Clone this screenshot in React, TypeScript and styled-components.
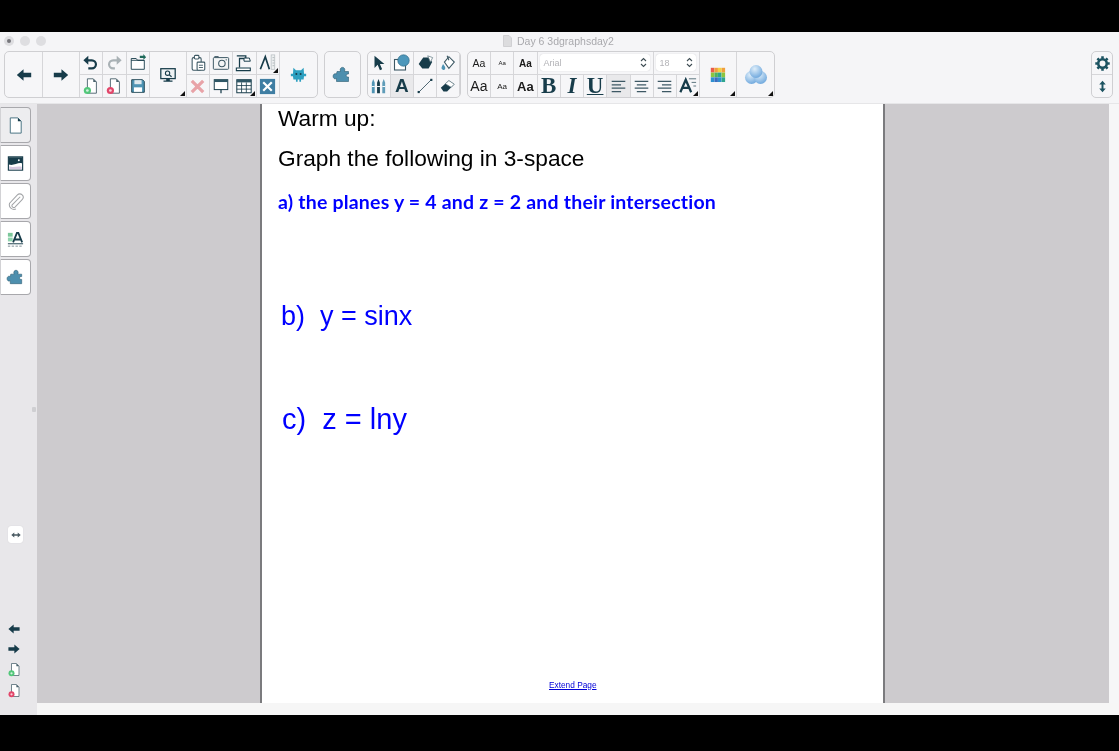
import React from "react";
import styled, { createGlobalStyle } from "styled-components";

const INK = "#173c4a";
const TEAL = "#4f94b4";

const GlobalStyle = createGlobalStyle`
    html, body {
        margin: 0;
        padding: 0;
        background: #000;
        font-family: "Liberation Sans", Arial, sans-serif;
    }
`;

const Screen = styled.div`
    width: 1119px;
    height: 751px;
    overflow: hidden;
    background: #000;
    display: flex;
    flex-direction: column;
    padding: 32px 0 36px;
    box-sizing: border-box;
`;

const Chrome = styled.div`
    background: #f5f5f7;
    filter: blur(0.35px);
    border-bottom: 1px solid #e6e6e8;
`;

const TitleBar = styled.div`
    height: 18px;
    display: flex;
    align-items: center;
    padding-left: 4px;
    position: relative;
`;

const Light = styled.span<{ $dot?: boolean }>`
    width: 10px;
    height: 10px;
    margin-right: 6px;
    border-radius: 50%;
    background: #dedee1;
    display: flex;
    align-items: center;
    justify-content: center;
    &::after {
        content: "";
        width: 4px;
        height: 4px;
        border-radius: 50%;
        background: ${(p) => (p.$dot ? "#77777c" : "transparent")};
    }
`;

const Title = styled.div`
    margin-left: 451px;
    display: flex;
    align-items: center;
    gap: 5px;
    font-size: 10.5px;
    color: #a9a9ad;
`;

const Toolbar = styled.div`
    height: 53px;
    padding: 1px 6px 0 4px;
    display: flex;
    align-items: flex-start;
    justify-content: space-between;
    box-sizing: border-box;
`;

const Groups = styled.div`
    display: flex;
    gap: 6px;
`;

const Group = styled.div`
    height: 47px;
    display: flex;
    border: 1px solid #cfcfd2;
    border-radius: 5px;
    box-sizing: border-box;
    background: #f6f6f8;
    overflow: hidden;
`;

const Stack = styled.div`
    display: flex;
    flex-direction: column;
`;

const Row = styled.div`
    display: flex;
    height: 23px;
    & + & {
        border-top: 1px solid #d6d6d9;
        height: 22px;
    }
`;

const Cell = styled.div<{ $w?: number; $on?: boolean; $tall?: boolean; $corner?: boolean }>`
    width: ${(p) => p.$w ?? 23.25}px;
    height: 100%;
    flex: none;
    position: relative;
    box-sizing: border-box;
    display: flex;
    align-items: center;
    justify-content: center;
    border-right: 1px solid #d6d6d9;
    background: ${(p) => (p.$on ? "#e9e9eb" : "transparent")};
    color: ${INK};
    &:last-child {
        border-right: ${(p) => (p.$tall ? "none" : "1px solid #d6d6d9")};
    }
    &::after {
        content: "";
        display: ${(p) => (p.$corner ? "block" : "none")};
        position: absolute;
        right: 1px;
        bottom: 1px;
        border-style: solid;
        border-width: 0 0 5px 5px;
        border-color: transparent transparent #111 transparent;
    }
`;

const SampleText = styled.span<{ $size: number; $bold?: boolean }>`
    font-size: ${(p) => p.$size}px;
    font-weight: ${(p) => (p.$bold ? 700 : 400)};
    color: #1a1a1a;
`;

const SerifMark = styled.span<{ $italic?: boolean; $under?: boolean }>`
    font-family: "Liberation Serif", "Times New Roman", serif;
    font-size: 23px;
    line-height: 22px;
    font-weight: 700;
    color: ${INK};
    font-style: ${(p) => (p.$italic ? "italic" : "normal")};
    text-decoration: ${(p) => (p.$under ? "underline" : "none")};
    text-decoration-thickness: 1px;
    text-underline-offset: 1px;
`;

const TextToolMark = styled.span`
    font-size: 19px;
    line-height: 22px;
    font-weight: 700;
    color: ${INK};
`;

const PickerCell = styled.div<{ $w: number }>`
    width: ${(p) => p.$w}px;
    height: 100%;
    flex: none;
    box-sizing: border-box;
    padding: 2px 3px 3px 2px;
    border-right: 1px solid #d6d6d9;
`;

const Picker = styled.div`
    height: 100%;
    box-sizing: border-box;
    padding: 0 3px 0 4px;
    background: #fff;
    border-radius: 3px;
    box-shadow: 0 0 1px #bcbcc0;
    display: flex;
    align-items: center;
    justify-content: space-between;
    font-size: 9px;
    color: #b3b3b7;
`;

const Body = styled.div`
    flex: 1;
    min-height: 0;
    display: flex;
    background: #f6f6f7;
`;

const Sidebar = styled.div`
    width: 37px;
    flex: none;
    background: #e8e7ea;
    display: flex;
    flex-direction: column;
    padding-top: 3px;
    box-sizing: border-box;
    position: relative;
    filter: blur(0.3px);
`;

const Tabs = styled.div`
    display: flex;
    flex-direction: column;
    gap: 2px;
`;

const Tab = styled.div<{ $on?: boolean }>`
    width: 30px;
    height: 36px;
    margin-left: 1px;
    box-sizing: border-box;
    background: ${(p) => (p.$on ? "#ededef" : "#fff")};
    border: 1px solid #a8a8ac;
    border-left: none;
    border-radius: 0 4px 4px 0;
    box-shadow: -1px 0 0 #d2d2d5;
    display: flex;
    align-items: center;
    justify-content: center;
`;

const Handle = styled.span`
    position: absolute;
    right: 1px;
    top: 303px;
    width: 4px;
    height: 5px;
    border-radius: 1px;
    background: #cfcfd2;
`;

const WidthToggle = styled.div`
    width: 15px;
    height: 17px;
    margin: 231px 0 0 8px;
    background: #fff;
    border-radius: 3px;
    display: flex;
    align-items: center;
    justify-content: center;
    box-shadow: 0 0 1px #c4c4c8;
`;

const PageNav = styled.div`
    margin: auto 0 17px 7px;
    display: flex;
    flex-direction: column;
    gap: 6px;
    & > svg {
        display: block;
    }
`;

const Workspace = styled.div`
    flex: 1;
    display: flex;
    flex-direction: column;
    min-width: 0;
`;

const Canvas = styled.div`
    flex: 1;
    min-height: 0;
    background: #cdcbce;
    margin-right: 10px;
    padding-left: 223px;
`;

const Sheet = styled.div`
    width: 625px;
    height: 100%;
    box-sizing: border-box;
    background: #fff;
    border-left: 2px solid #7b7b7e;
    border-right: 2px solid #7b7b7e;
    padding-left: 16px;
    display: flex;
    flex-direction: column;
    color: #000;
    filter: blur(0.25px);
`;

const Heading = styled.div<{ $gap: number }>`
    font-size: 22.7px;
    line-height: 28px;
    margin-top: ${(p) => p.$gap}px;
`;

const HandNote = styled.div`
    font-family: "Lato", "Open Sans", sans-serif;
    font-weight: 700;
    font-size: 19.5px;
    line-height: 24px;
    letter-spacing: 0.2px;
    color: #0000ff;
    margin-top: 18px;
`;

const Problem = styled.div<{ $gap: number; $indent: number; $size: number }>`
    font-size: ${(p) => p.$size}px;
    line-height: 34px;
    color: #0000ff;
    white-space: pre;
    margin-top: ${(p) => p.$gap}px;
    margin-left: ${(p) => p.$indent}px;
`;

const ExtendLink = styled.a`
    margin: auto 0 12px 271px;
    font-size: 8.3px;
    line-height: 12px;
    color: #0000d8;
    text-decoration: underline;
`;

const BottomStrip = styled.div`
    height: 12px;
    flex: none;
    background: #f6f6f6;
    box-sizing: border-box;
`;

type IconProps = { size?: number };

const Ico = ({ size = 20, children }: IconProps & { children: React.ReactNode }) => (
    <svg width={size} height={size} viewBox="0 0 20 20" fill="none">
        {children}
    </svg>
);

const ArrowLeft = ({ size = 20 }: IconProps) => (
    <Ico size={size}>
        <path d="M2 10 L9.5 3.5 V7.5 H18 V12.5 H9.5 V16.5 Z" fill={INK} />
    </Ico>
);
const ArrowRight = ({ size = 20 }: IconProps) => (
    <Ico size={size}>
        <path d="M18 10 L10.5 3.5 V7.5 H2 V12.5 H10.5 V16.5 Z" fill={INK} />
    </Ico>
);
const Undo = ({ color = INK }: { color?: string }) => (
    <Ico size={18}>
        <path d="M6 7 H11 A4.5 4.5 0 0 1 11 16 H7" stroke={color} strokeWidth="2.4" />
        <path d="M7 2 V12 L1.5 7 Z" fill={color} />
    </Ico>
);
const Redo = ({ color = "#a9b1b5" }: { color?: string }) => (
    <Ico size={18}>
        <path d="M14 7 H9 A4.5 4.5 0 0 0 9 16 H11" stroke={color} strokeWidth="2.4" />
        <path d="M13 2 V12 L18.5 7 Z" fill={color} />
    </Ico>
);
const Folder = () => (
    <Ico size={18}>
        <path d="M2.5 5 H8 L9.5 7 H17 V17 H2.5 Z" fill="#fff" stroke={INK} strokeWidth="1" />
        <path d="M2.5 7 H17" stroke={INK} strokeWidth="1" />
        <path d="M12 2 L16 2 V0 L19 3.5 L16 6.5 V4.5 H12 Z" fill="#1f6a5a" />
    </Ico>
);
const PageBadge = ({ badge, size = 18 }: { badge?: string; size?: number }) => (
    <Ico size={size}>
        <path d="M6 2 H12.5 L16 5.5 V18 H6 Z" fill="#fff" stroke="#47606b" strokeWidth="1" />
        <path d="M12.5 2 V5.5 H16 Z" fill="#47606b" />
        {badge && <circle cx="6" cy="15" r="4" fill={badge} />}
        {badge && <circle cx="6" cy="15" r="1.5" fill="#fff" opacity="0.75" />}
    </Ico>
);
const Floppy = () => (
    <Ico size={18}>
        <path d="M3 3 H15 L17 5 V17 H3 Z" fill={TEAL} stroke={INK} strokeWidth="1" />
        <rect x="6" y="3.5" width="8" height="4.5" fill="#dfe9ee" />
        <rect x="5.5" y="11.5" width="9" height="5" fill="#fff" />
    </Ico>
);
const Presenter = () => (
    <Ico size={18}>
        <rect x="2" y="3" width="16" height="11" fill="#eef2f4" stroke={INK} strokeWidth="1.4" />
        <circle cx="9.5" cy="8" r="2.4" stroke={INK} strokeWidth="1.2" />
        <path d="M11.5 10 L14 12" stroke={INK} strokeWidth="1.3" />
        <path d="M8 14 H12 V16 H15 V17.5 H5 V16 H8 Z" fill={INK} />
    </Ico>
);
const Clipboard = () => (
    <Ico size={18}>
        <rect x="3.5" y="4" width="10" height="14" rx="1.5" fill="#fff" stroke="#3d5864" strokeWidth="1.2" />
        <rect x="6" y="1.5" width="5" height="4" rx="1" fill="#fff" stroke="#3d5864" strokeWidth="1.2" />
        <rect x="9" y="9" width="8.5" height="9" rx="1" fill="#fff" stroke="#3d5864" strokeWidth="1.2" />
        <path d="M11 12.5 H15.5 M11 15 H15.5" stroke="#3d5864" strokeWidth="1" />
    </Ico>
);
const Camera = () => (
    <Ico size={18}>
        <rect x="1.5" y="4" width="17" height="13" rx="1" fill="#f3f5f6" stroke="#3d5864" strokeWidth="1.1" />
        <path d="M3 4 V2.8 H7 V4" stroke="#3d5864" strokeWidth="1" />
        <circle cx="11" cy="10.5" r="3.6" stroke="#3d5864" strokeWidth="1.2" />
        <circle cx="15.8" cy="6.5" r="0.8" fill="#3d5864" />
    </Ico>
);
const DocCamera = () => (
    <Ico size={18}>
        <path d="M2 2 H12 V5 H5 V15" stroke={INK} strokeWidth="1.4" fill="none" />
        <path d="M10 4.5 H16 L17 8 H10 Z" fill="#fff" stroke={INK} strokeWidth="1.1" />
        <path d="M1.5 15.5 H17 V18.5 H1.5 Z" fill="#fff" stroke={INK} strokeWidth="1.2" />
    </Ico>
);
const Compass = () => (
    <Ico size={18}>
        <path d="M1.5 17 L7 3 L11.5 17" stroke={INK} strokeWidth="1.9" />
        <rect x="13.5" y="1" width="4" height="16" fill="#eef0f1" stroke="#b5bcc0" strokeWidth="0.8" />
        <path d="M15 4 H17 M15 7 H17 M15 10 H17 M15 13 H17" stroke="#9fa8ad" strokeWidth="0.8" />
    </Ico>
);
const RedX = () => (
    <Ico size={19}>
        <path d="M4 4 L16 16 M16 4 L4 16" stroke="#e8a3a8" strokeWidth="3.4" />
    </Ico>
);
const Screenboard = () => (
    <Ico size={18}>
        <rect x="2.5" y="3" width="15" height="11" fill="#fff" stroke={INK} strokeWidth="1.1" />
        <rect x="2.5" y="3" width="15" height="2.6" fill="#2e5665" />
        <path d="M10 14 V18" stroke={INK} strokeWidth="1.4" />
    </Ico>
);
const TableGrid = () => (
    <Ico size={18}>
        <rect x="2" y="3" width="16" height="14.5" fill="#fff" stroke={INK} strokeWidth="1.1" />
        <rect x="2" y="3" width="16" height="3" fill="#2e5665" />
        <path d="M2 9.5 H18 M2 13.5 H18 M7.3 6 V17.5 M12.6 6 V17.5" stroke={INK} strokeWidth="0.9" />
    </Ico>
);
const ToolBox = () => (
    <Ico size={19}>
        <rect x="2" y="2" width="16" height="16" fill="#3f7ea3" />
        <path d="M5.5 5.5 L14.5 14.5 M14.5 5.5 L5.5 14.5" stroke="#fff" strokeWidth="2.3" />
    </Ico>
);
const Critter = () => (
    <Ico size={17}>
        <path
            d="M4 2 L7 5 H13 L16 2 L16.5 9 H19 V12 H16.5 L16 16 H13 V18.5 H11 V16 H9 V18.5 H7 V16 H4 L3.5 12 H1 V9 H3.5 Z"
            fill="#2c9fc0"
        />
        <circle cx="7.5" cy="9.5" r="1.2" fill={INK} />
        <circle cx="12.5" cy="9.5" r="1.2" fill={INK} />
    </Ico>
);
const Puzzle = ({ size = 19 }: IconProps) => (
    <Ico size={size}>
        <path
            d="M5 6.5 H8.5 C6.5 1 14.5 1 12.5 6.5 H16.5 V9 C13.5 8.5 13.5 12.5 16.5 12 V16.5 H4.5 V13.5 C0 15.5 0 7 4.5 9 Z"
            fill="#4d8fae"
            stroke="#2a5a70"
            strokeWidth="0.6"
        />
    </Ico>
);
const Pointer = () => (
    <Ico size={18}>
        <path d="M5 2 L16 11 H11 L13.5 17 L11 18 L8.5 12 L5 15.5 Z" fill={INK} />
    </Ico>
);
const Shapes = () => (
    <Ico size={20}>
        <rect x="2.5" y="6.5" width="11" height="10.5" fill="#fff" stroke="#3d5864" strokeWidth="1.1" />
        <circle cx="11.5" cy="7.5" r="5.7" fill="#4d97bb" stroke="#2f6c88" strokeWidth="0.7" />
    </Ico>
);
const Eraser3d = () => (
    <Ico size={18}>
        <path d="M8 4 H14 L18 9 L14 16 H7 L3 11 Z" fill={INK} />
        <path d="M13 2 L18.5 4 L16 9 Z" fill="#fff" stroke="#5d7680" strokeWidth="0.8" />
    </Ico>
);
const Bucket = () => (
    <Ico size={18}>
        <path d="M6 9 L11 3 L17 9 L11 16 Z" fill="#fff" stroke="#3d5864" strokeWidth="1.2" />
        <path d="M9 2 L11 7" stroke="#3d5864" strokeWidth="1.2" />
        <path d="M4.5 11 C3 14 2.5 15 3 16.5 C4 18.5 7 18 7 15.5 C7 14 5.5 12.5 4.5 11 Z" fill={TEAL} />
    </Ico>
);
const Pens = () => (
    <Ico size={19}>
        <path d="M3 6 L4.5 2 L6 6 V17 H3 Z" fill={TEAL} />
        <path d="M8.5 6 L10 2 L11.5 6 V17 H8.5 Z" fill={INK} />
        <path d="M14 6 L15.5 2 L17 6 V17 H14 Z" fill="#5f9cb8" />
        <path d="M3 10 H6 M8.5 10 H11.5 M14 10 H17" stroke="#fff" strokeWidth="1" />
    </Ico>
);
const LineTool = () => (
    <Ico size={18}>
        <path d="M3 17 L17 3" stroke="#3d5864" strokeWidth="1" />
        <rect x="1.8" y="15.5" width="2.4" height="2.4" fill={INK} />
        <rect x="15.8" y="2" width="2.4" height="2.4" fill={INK} />
    </Ico>
);
const Eraser = () => (
    <Ico size={18}>
        <path d="M2 12 L11 4 L17 8 L9 16 H5 Z" fill={INK} />
        <path d="M11 4 L17 8 L13.5 11.5 L7 7.5 Z" fill="#fff" stroke="#5d7680" strokeWidth="0.8" />
    </Ico>
);
const UpDown = () => (
    <svg width="7" height="11" viewBox="0 0 7 11" fill="none">
        <path d="M1 4 L3.5 1.5 L6 4 M1 7 L3.5 9.5 L6 7" stroke="#3f4d54" strokeWidth="1.1" />
    </svg>
);
const AlignLines = ({ mode }: { mode: "left" | "center" | "right" }) => {
    const long = [3, 7, 11, 15];
    const d = long
        .map((y, i) => {
            const w = i % 2 ? 11 : 16;
            const x = mode === "left" ? 2 : mode === "right" ? 18 - w : 10 - w / 2;
            return `M${x} ${y + 1} H${x + w}`;
        })
        .join(" ");
    return (
        <Ico size={17}>
            <path d={d} stroke="#3d5864" strokeWidth="1.4" />
        </Ico>
    );
};
const LetterSpacing = () => (
    <Ico size={18}>
        <path d="M1.5 17 L7.5 3 L13.5 17 M4 12 H11" stroke={INK} strokeWidth="2.5" />
        <path d="M11 2 H19 M14 6 H19 M16 10 H19" stroke="#5d7680" strokeWidth="1.1" />
    </Ico>
);
const Swatches = () => {
    const colors = [
        ["#e85b4a", "#f0a03c", "#f4d13f", "#f0a03c"],
        ["#8cc63f", "#4fb35f", "#2fa58e", "#8cc63f"],
        ["#2f8fd0", "#3a6fc0", "#2f8fd0", "#2fa58e"],
    ];
    return (
        <Ico size={18}>
            {colors.map((r, y) =>
                r.map((c, x) => <rect key={`${x}-${y}`} x={2 + x * 4} y={2 + y * 5.3} width="3.9" height="5.2" fill={c} />)
            )}
        </Ico>
    );
};
const Blobs = () => (
    <svg width="24" height="24" viewBox="0 0 24 24">
        <defs>
            <radialGradient id="blob" cx="40%" cy="30%" r="75%">
                <stop offset="0%" stopColor="#dfeefa" />
                <stop offset="100%" stopColor="#6aa5dc" />
            </radialGradient>
        </defs>
        <circle cx="7.5" cy="14.5" r="6.5" fill="url(#blob)" />
        <circle cx="16.5" cy="14.5" r="6.5" fill="url(#blob)" />
        <circle cx="12" cy="8.5" r="6.5" fill="url(#blob)" />
    </svg>
);
const Gear = () => (
    <Ico size={17}>
        <circle cx="10" cy="10" r="5" stroke="#1c5361" strokeWidth="3" />
        <path
            d="M10 1.5 V4.5 M10 15.5 V18.5 M1.5 10 H4.5 M15.5 10 H18.5 M4 4 L6 6 M14 14 L16 16 M16 4 L14 6 M6 14 L4 16"
            stroke="#1c5361"
            strokeWidth="3"
        />
    </Ico>
);
const TallArrows = () => (
    <Ico size={13}>
        <path d="M10 1 L15 7 H11.5 V13 H15 L10 19 L5 13 H8.5 V7 H5 Z" fill="#1c5361" />
    </Ico>
);
const WideArrows = () => (
    <svg width="10" height="6" viewBox="0 0 11 7">
        <path d="M0 3.5 L3.5 0.5 V2.6 H7.5 V0.5 L11 3.5 L7.5 6.5 V4.4 H3.5 V6.5 Z" fill="#4a5a62" />
    </svg>
);
const DocBlank = () => (
    <Ico size={19}>
        <path d="M4.5 2 H12.5 L16 5.5 V18 H4.5 Z" fill="#fff" stroke="#44707f" strokeWidth="1" />
        <path d="M12.5 2 V5.5 H16 Z" fill={INK} />
    </Ico>
);
const Gallery = () => (
    <Ico size={19}>
        <rect x="2.5" y="3" width="15" height="14" fill="#fff" stroke={INK} strokeWidth="1.2" />
        <path d="M3 3.5 H17 V10 C13 8 8 13 3 11 Z" fill={INK} />
        <circle cx="13.5" cy="6.5" r="1" fill="#fff" />
        <path d="M3.5 13 C8 15 12 12 16.5 13.5 V16 H3.5 Z" fill="#d6c9e0" />
    </Ico>
);
const Clip = () => (
    <Ico size={19}>
        <path
            d="M15 5 L6.5 13.5 A2 2 0 0 0 9.5 16 L17 8 A3.5 3.5 0 0 0 12 3 L3.8 11.8 A5 5 0 0 0 10.5 18"
            stroke="#a3a5a8"
            strokeWidth="1.1"
        />
    </Ico>
);
const Properties = () => (
    <Ico size={19}>
        <rect x="2" y="3" width="5" height="4" fill="#7bc79a" />
        <rect x="2" y="8" width="5" height="4" fill="#8fd4ad" />
        <path d="M7.5 13 L11.5 3 H13 L17 13 M9.5 10 H15" stroke={INK} strokeWidth="1.9" />
        <path d="M2 14.5 H18" stroke={INK} strokeWidth="1" />
        <path d="M2 17 H18" stroke="#7a8a92" strokeWidth="1" strokeDasharray="2.5 1.5" />
    </Ico>
);
const DocOutline = () => (
    <svg width="9" height="12" viewBox="0 0 9 12">
        <path d="M0.5 0.5 H6 L8.5 3 V11.5 H0.5 Z" fill="#dcdcde" stroke="#d0d0d3" />
    </svg>
);

export default function App() {
    return (
        <Screen>
            <GlobalStyle />
            <Chrome>
                <TitleBar>
                    <Light $dot />
                    <Light />
                    <Light />
                    <Title>
                        <DocOutline />
                        Day 6 3dgraphsday2
                    </Title>
                </TitleBar>
                <Toolbar>
                    <Groups>
                        <Group>
                            <Cell $w={38}><ArrowLeft size={18} /></Cell>
                            <Cell $w={37}><ArrowRight size={18} /></Cell>
                            <Stack>
                                <Row>
                                    <Cell><Undo /></Cell>
                                    <Cell><Redo /></Cell>
                                    <Cell><Folder /></Cell>
                                </Row>
                                <Row>
                                    <Cell><PageBadge badge="#52c77a" /></Cell>
                                    <Cell><PageBadge badge="#e2466a" /></Cell>
                                    <Cell><Floppy /></Cell>
                                </Row>
                            </Stack>
                            <Cell $w={37} $corner><Presenter /></Cell>
                            <Stack>
                                <Row>
                                    <Cell><Clipboard /></Cell>
                                    <Cell><Camera /></Cell>
                                    <Cell><DocCamera /></Cell>
                                    <Cell $corner><Compass /></Cell>
                                </Row>
                                <Row>
                                    <Cell><RedX /></Cell>
                                    <Cell><Screenboard /></Cell>
                                    <Cell $corner><TableGrid /></Cell>
                                    <Cell><ToolBox /></Cell>
                                </Row>
                            </Stack>
                            <Cell $w={37} $tall><Critter /></Cell>
                        </Group>
                        <Group>
                            <Cell $w={35} $tall><Puzzle size={20} /></Cell>
                        </Group>
                        <Group>
                            <Stack>
                                <Row>
                                    <Cell $w={23}><Pointer /></Cell>
                                    <Cell $w={23}><Shapes /></Cell>
                                    <Cell $w={23}><Eraser3d /></Cell>
                                    <Cell $w={23}><Bucket /></Cell>
                                </Row>
                                <Row>
                                    <Cell $w={23}><Pens /></Cell>
                                    <Cell $w={23} $on><TextToolMark>A</TextToolMark></Cell>
                                    <Cell $w={23}><LineTool /></Cell>
                                    <Cell $w={23}><Eraser /></Cell>
                                </Row>
                            </Stack>
                        </Group>
                        <Group>
                            <Stack>
                                <Row>
                                    <Cell><SampleText $size={10.5}>Aa</SampleText></Cell>
                                    <Cell><SampleText $size={6}>Aa</SampleText></Cell>
                                    <Cell><SampleText $size={10} $bold>Aa</SampleText></Cell>
                                    <PickerCell $w={116}>
                                        <Picker>Arial<UpDown /></Picker>
                                    </PickerCell>
                                    <PickerCell $w={46.75}>
                                        <Picker>18<UpDown /></Picker>
                                    </PickerCell>
                                </Row>
                                <Row>
                                    <Cell><SampleText $size={14}>Aa</SampleText></Cell>
                                    <Cell><SampleText $size={8}>Aa</SampleText></Cell>
                                    <Cell><SampleText $size={13} $bold>Aa</SampleText></Cell>
                                    <Cell><SerifMark>B</SerifMark></Cell>
                                    <Cell><SerifMark $italic>I</SerifMark></Cell>
                                    <Cell><SerifMark $under>U</SerifMark></Cell>
                                    <Cell $on><AlignLines mode="left" /></Cell>
                                    <Cell><AlignLines mode="center" /></Cell>
                                    <Cell><AlignLines mode="right" /></Cell>
                                    <Cell $corner><LetterSpacing /></Cell>
                                </Row>
                            </Stack>
                            <Cell $w={37} $corner><Swatches /></Cell>
                            <Cell $w={37} $tall $corner><Blobs /></Cell>
                        </Group>
                    </Groups>
                    <Group>
                        <Stack>
                            <Row>
                                <Cell $w={20} $tall><Gear /></Cell>
                            </Row>
                            <Row>
                                <Cell $w={20} $tall><TallArrows /></Cell>
                            </Row>
                        </Stack>
                    </Group>
                </Toolbar>
            </Chrome>
            <Body>
                <Sidebar>
                    <Tabs>
                        <Tab $on><DocBlank /></Tab>
                        <Tab><Gallery /></Tab>
                        <Tab><Clip /></Tab>
                        <Tab><Properties /></Tab>
                        <Tab><Puzzle /></Tab>
                    </Tabs>
                    <Handle />
                    <WidthToggle><WideArrows /></WidthToggle>
                    <PageNav>
                        <ArrowLeft size={14} />
                        <ArrowRight size={14} />
                        <PageBadge badge="#52c77a" size={15} />
                        <PageBadge badge="#e2466a" size={15} />
                    </PageNav>
                </Sidebar>
                <Workspace>
                    <Canvas>
                        <Sheet>
                            <Heading $gap={0}>Warm up:</Heading>
                            <Heading $gap={12}>Graph the following in 3-space</Heading>
                            <HandNote>a) the planes y = 4 and z = 2 and their intersection</HandNote>
                            <Problem $gap={85} $indent={3} $size={27}>{"b)  y = sinx"}</Problem>
                            <Problem $gap={69} $indent={4} $size={29}>{"c)  z = lny"}</Problem>
                            <ExtendLink>Extend Page</ExtendLink>
                        </Sheet>
                    </Canvas>
                    <BottomStrip />
                </Workspace>
            </Body>
        </Screen>
    );
}
